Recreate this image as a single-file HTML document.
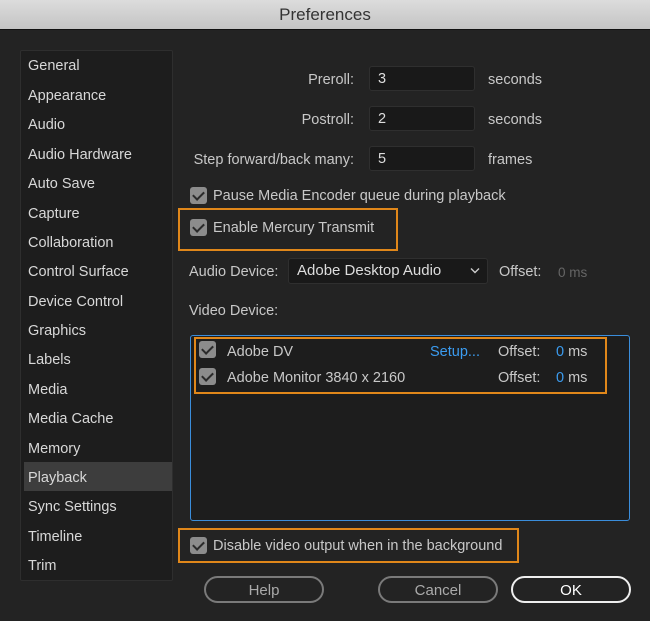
<!DOCTYPE html>
<html><head><style>
*{margin:0;padding:0;box-sizing:border-box}
body{width:650px;height:621px;background:#232323;font-family:"Liberation Sans",sans-serif;color:#c8c8c8;position:relative;overflow:hidden;font-size:14.5px}
.a{position:absolute;white-space:nowrap;margin-top:2px}
#title{left:0;top:0;width:650px;height:30px;background:linear-gradient(#dcdcdc,#c4c4c4);color:#333;font-size:17px;text-align:center;line-height:30px;border-bottom:1px solid #111;margin-top:0}
#side{left:20px;top:50px;width:153px;height:531px;background:#1d1d1d;border:1px solid #2e2e2e;border-radius:2px;margin-top:0}
.it{position:absolute;left:7px;font-size:14.5px;color:#d8d8d8;margin-top:2px}
.sel{position:absolute;left:3px;width:148px;height:29px;background:#3d3d3d}
.in{position:absolute;background:#191919;border:1px solid #2f2f2f;border-radius:3px;height:25px;color:#ddd;padding-left:8px;line-height:25px}
.cb{position:absolute;width:17px;height:17px;background:#8c8c8c;border-radius:3px}
.cb:after{content:"";position:absolute;left:5px;top:2px;width:5px;height:9px;border:solid #2a2a2a;border-width:0 2px 2px 0;transform:rotate(45deg)}
.or{position:absolute;border:2px solid #e0871a}
.btn{position:absolute;top:576px;height:27px;border:2px solid #7a7a7a;border-radius:14px;text-align:center;line-height:25px;font-size:15px;color:#aaa}
</style></head><body>
<div class="a" id="title">Preferences</div>
<div class="a" id="side">
<div class="sel" style="top:411px"></div>
<div class="it" style="top:5px">General</div>
<div class="it" style="top:35px">Appearance</div>
<div class="it" style="top:64px">Audio</div>
<div class="it" style="top:94px">Audio Hardware</div>
<div class="it" style="top:123px">Auto Save</div>
<div class="it" style="top:153px">Capture</div>
<div class="it" style="top:182px">Collaboration</div>
<div class="it" style="top:211px">Control Surface</div>
<div class="it" style="top:241px">Device Control</div>
<div class="it" style="top:270px">Graphics</div>
<div class="it" style="top:299px">Labels</div>
<div class="it" style="top:329px">Media</div>
<div class="it" style="top:358px">Media Cache</div>
<div class="it" style="top:388px">Memory</div>
<div class="it" style="top:417px">Playback</div>
<div class="it" style="top:446px">Sync Settings</div>
<div class="it" style="top:476px">Timeline</div>
<div class="it" style="top:505px">Trim</div>
</div>
<div class="a" style="right:296px;top:70px">Preroll:</div>
<div class="in" style="left:369px;top:66px;width:106px">3</div>
<div class="a" style="left:488px;top:70px">seconds</div>
<div class="a" style="right:296px;top:110px">Postroll:</div>
<div class="in" style="left:369px;top:106px;width:106px">2</div>
<div class="a" style="left:488px;top:110px">seconds</div>
<div class="a" style="right:296px;top:150px">Step forward/back many:</div>
<div class="in" style="left:369px;top:146px;width:106px">5</div>
<div class="a" style="left:488px;top:150px">frames</div>
<div class="cb" style="left:190px;top:187px"></div>
<div class="a" style="left:213px;top:186px">Pause Media Encoder queue during playback</div>
<div class="or" style="left:178px;top:208px;width:220px;height:43px"></div>
<div class="cb" style="left:190px;top:219px"></div>
<div class="a" style="left:213px;top:218px">Enable Mercury Transmit</div>
<div class="a" style="left:189px;top:262px">Audio Device:</div>
<div class="in" style="left:288px;top:258px;width:200px;height:26px;font-size:15px;line-height:24px">Adobe Desktop Audio<svg style="position:absolute;right:7px;top:8px" width="10" height="7" viewBox="0 0 10 7"><path d="M1 1.5 L5 5.5 L9 1.5" stroke="#ccc" stroke-width="1.4" fill="none"/></svg></div>
<div class="a" style="left:499px;top:262px">Offset:</div>
<div class="a" style="left:558px;top:263px;color:#666;font-size:13.5px">0 ms</div>
<div class="a" style="left:189px;top:301px">Video Device:</div>
<div class="a" style="left:190px;top:335px;width:440px;height:186px;border:1px solid #3a8ddb;border-radius:3px;background:#1d1d1d;margin-top:0"></div>
<div class="or" style="left:194px;top:337px;width:413px;height:57px"></div>
<div class="cb" style="left:199px;top:341px"></div>
<div class="a" style="left:227px;top:342px">Adobe DV</div>
<div class="a" style="left:430px;top:342px;color:#3b9cf0">Setup...</div>
<div class="a" style="left:498px;top:342px">Offset:</div>
<div class="a" style="left:556px;top:342px"><span style="color:#3b9cf0">0</span> ms</div>
<div class="cb" style="left:199px;top:368px"></div>
<div class="a" style="left:227px;top:368px">Adobe Monitor 3840 x 2160</div>
<div class="a" style="left:498px;top:368px">Offset:</div>
<div class="a" style="left:556px;top:368px"><span style="color:#3b9cf0">0</span> ms</div>
<div class="or" style="left:178px;top:528px;width:341px;height:35px"></div>
<div class="cb" style="left:190px;top:537px"></div>
<div class="a" style="left:213px;top:536px">Disable video output when in the background</div>
<div class="btn" style="left:204px;width:120px">Help</div>
<div class="btn" style="left:378px;width:120px">Cancel</div>
<div class="btn" style="left:511px;width:120px;border-color:#eee;color:#fff">OK</div>
</body></html>
